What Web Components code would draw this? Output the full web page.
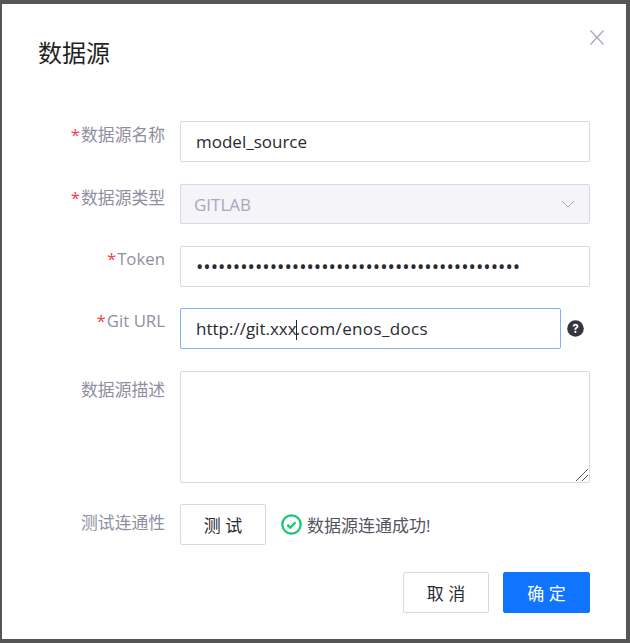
<!DOCTYPE html>
<html lang="zh">
<head>
<meta charset="utf-8">
<title>数据源</title>
<style>
  html, body { margin: 0; height: 100%; }
  body {
    background: #555;
    font-family: "Open Sans", "Noto Sans CJK SC", sans-serif;
    padding: 4px 4px 4px 2px;
    box-sizing: border-box;
    height: 643px;
    overflow: hidden;
  }
</style>
</head>
<body>
<ds-modal heading="数据源">
  <ds-row label="数据源名称" required loose><ds-field>model_source</ds-field></ds-row>
  <ds-row label="数据源类型" required loose><ds-field select>GITLAB</ds-field></ds-row>
  <ds-row label="Token" required latin><ds-field secret>••••••••••••••••••••••••••••••••••••••••••••</ds-field></ds-row>
  <ds-row label="Git URL" required loose latin>
    <ds-field focused>http://git.xxx<i style="display:inline-block;width:1px;height:20px;margin:0 -1px 0 -1px;background:#222;vertical-align:-5px"></i><span style="letter-spacing:.35px">.com/enos_docs</span></ds-field>
    <ds-help></ds-help>
  </ds-row>
  <ds-row label="数据源描述" low><ds-field area></ds-field></ds-row>
  <ds-row label="测试连通性" low>
    <ds-button>测 试</ds-button>
    <ds-status>数据源连通成功!</ds-status>
  </ds-row>
  <ds-button slot="footer">取 消</ds-button>
  <ds-button slot="footer" primary>确 定</ds-button>
</ds-modal>
<script>
(function () {
  'use strict';

  class DsModal extends HTMLElement {
    constructor() {
      super();
      this.attachShadow({ mode: 'open' }).innerHTML = `
      <style>
        :host {
          display: block;
          box-sizing: border-box;
          width: 624px;
          height: 635px;
          background: #fff;
          position: relative;
          color: #2a2a33;
        }
        .title {
          font-size: 24px;
          line-height: 34px;
          font-weight: 400;
          padding: 32px 0 0 36px;
          margin: 0 0 51px;
          color: #1f1f24;
        }
        .close {
          position: absolute;
          top: 26px;
          right: 22px;
          width: 14px;
          height: 15px;
        }
        .body { display: flex; flex-direction: column; gap: 21px; padding-right: 36px; }
        .footer {
          display: flex;
          justify-content: flex-end;
          gap: 14px;
          padding: 27px 36px 0 0;
        }
      </style>
      <h1 class="title"></h1>
      <svg class="close" viewBox="0 0 14 15" fill="none" stroke="#a9a9b8" stroke-width="1.3"><path d="M.5.5l13 14M13.500.5l-13 14"/></svg>
      <div class="body"><slot></slot></div>
      <div class="footer"><slot name="footer"></slot></div>`;
      this.shadowRoot.querySelector('.title').textContent = this.getAttribute('heading');
    }
  }

  class DsRow extends HTMLElement {
    constructor() {
      super();
      this.attachShadow({ mode: 'open' }).innerHTML = `
      <style>
        :host { display: flex; align-items: flex-start; }
        :host([loose]) { margin-bottom: 1px; }
        .label {
          box-sizing: border-box;
          width: 178px;
          flex: none;
          padding: 0 15px 0 0;
          text-align: right;
          font-size: 16.8px;
          line-height: 28px;
          color: #8f8fa1;
        }
        :host([low]) .label { padding-top: 5px; }
        :host([latin]) .label { line-height: 26px; }
        .star { color: #f5404a; margin-right: 1px; }
        .ctl { flex: 1; display: flex; align-items: center; min-width: 0; }
      </style>
      <div class="label"></div>
      <div class="ctl"><slot></slot></div>`;
      const label = this.shadowRoot.querySelector('.label');
      if (this.hasAttribute('required')) {
        const s = document.createElement('span');
        s.className = 'star';
        s.textContent = '*';
        label.appendChild(s);
      }
      label.appendChild(document.createTextNode(this.getAttribute('label')));
    }
  }

  class DsField extends HTMLElement {
    constructor() {
      super();
      this.attachShadow({ mode: 'open' }).innerHTML = `
      <style>
        :host {
          display: flex;
          flex: 1;
          align-items: center;
          box-sizing: border-box;
          height: 41px;
          min-width: 0;
          padding: 0 15px;
          border: 1px solid #d8d8e2;
          border-radius: 2px;
          background: #fff;
          font-size: 17px;
          color: #2a2a33;
          position: relative;
          white-space: pre;
        }
        :host([select]) {
          height: 40px;
          padding-left: 13px;
          background: #f4f4f9;
          color: #a9a9b9;
        }
        :host([secret]) { font-size: 19.6px; }
        :host([focused]) { border-color: #80b0f8; }
        :host([area]) { height: 112px; }
        svg { display: none; position: absolute; }
        :host([select]) .arrow { display: block; right: 14px; top: 15px; }
        :host([area]) .grip { display: block; right: 0; bottom: 0; }
      </style>
      <div><slot></slot></div>
      <svg class="arrow" width="14" height="8" viewBox="0 0 14 8" fill="none" stroke="#a9a9b8" stroke-width="1"><path d="M1 1l6 6 6-6"/></svg>
      <svg class="grip" width="14" height="14" viewBox="0 0 14 14" fill="none" stroke="#555" stroke-width="1"><path d="M1 13L13 1M7 13l6-6"/></svg>`;
    }
  }

  class DsHelp extends HTMLElement {
    constructor() {
      super();
      this.attachShadow({ mode: 'open' }).innerHTML = `
      <style>
        :host { display: block; flex: none; width: 17px; height: 17px; margin: 0 6px; }
        svg { display: block; }
      </style>
      <svg width="17" height="17" viewBox="0 0 17 17">
        <circle cx="8.5" cy="8.5" r="8.3" fill="#35353f"/>
        <path d="M5.6 6.500c0-1.700 1.300-2.700 2.900-2.700s3 1 3 2.500c0 2-2.300 2-2.300 3.500H7.400c0-2.500 2.100-2.500 2.100-3.500 0-.5-.4-.8-1-.8s-1 .4-1 1z" fill="#fff"/>
        <rect x="7.400" y="10.800" width="1.900" height="2" fill="#fff"/>
      </svg>`;
    }
  }

  class DsButton extends HTMLElement {
    constructor() {
      super();
      this.attachShadow({ mode: 'open' }).innerHTML = `
      <style>
        :host {
          display: inline-flex;
          align-items: center;
          justify-content: center;
          box-sizing: border-box;
          flex: none;
          width: 86px;
          height: 41px;
          border: 1px solid #d8d8e2;
          border-radius: 2px;
          background: #fff;
          color: #2a2a33;
          font-size: 17px;
          white-space: pre;
        }
        :host([primary]) { width: 87px; background: #0f75ff; border-color: #0f75ff; color: #fff; }
      </style>
      <slot></slot>`;
    }
  }

  class DsStatus extends HTMLElement {
    constructor() {
      super();
      this.attachShadow({ mode: 'open' }).innerHTML = `
      <style>
        :host {
          display: flex;
          align-items: center;
          gap: 5px;
          margin-left: 15px;
          font-size: 17px;
          color: #55555f;
          white-space: nowrap;
        }
        svg { display: block; flex: none; }
      </style>
      <svg width="21" height="21" viewBox="0 0 21 21" fill="none">
        <circle cx="10.500" cy="10.500" r="9.200" stroke="#16c872" stroke-width="2.300"/>
        <path d="M6.300 10.800l3 2.800 5.200-5.400" stroke="#16c872" stroke-width="2.300"/>
      </svg>
      <span><slot></slot></span>`;
    }
  }

  customElements.define('ds-modal', DsModal);
  customElements.define('ds-row', DsRow);
  customElements.define('ds-field', DsField);
  customElements.define('ds-help', DsHelp);
  customElements.define('ds-button', DsButton);
  customElements.define('ds-status', DsStatus);
})();
</script>
</body>
</html>
